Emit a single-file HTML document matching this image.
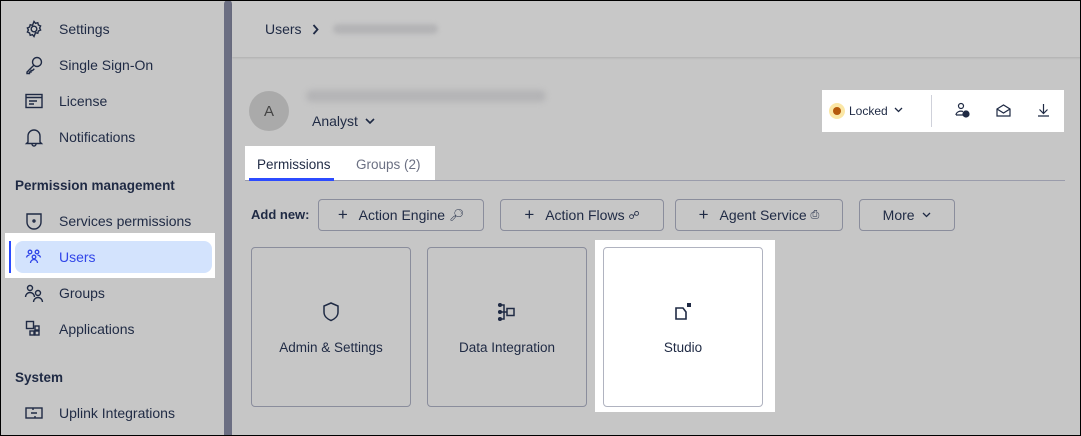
<!DOCTYPE html>
<html><head><meta charset="utf-8"><style>
*{box-sizing:border-box;margin:0;padding:0}
body{width:1081px;height:436px;overflow:hidden;background:#c6c6c6;font-family:"Liberation Sans",sans-serif;color:#1f2a44;position:relative}
.abs{position:absolute}
.nav{position:absolute;left:24px;font-size:14px;display:flex;align-items:center}
.nav svg{width:20px;height:20px;margin-right:15px}
.sec{position:absolute;left:15px;font-size:13.5px;font-weight:bold}
.btn{position:absolute;top:199px;height:32px;border:1px solid #8a8d9c;border-radius:4px;font-size:14px;display:flex;align-items:center;justify-content:center;background:#c6c6c6}
.card{position:absolute;top:247px;width:160px;height:160px;border:1px solid #8a8d9c;border-radius:4px;font-size:13.5px;text-align:center}
.card svg{position:absolute;left:67px;top:52px}
.card span{position:absolute;left:0;right:0;top:92px}
</style></head><body>
<div class="abs" style="left:224px;top:0;width:8px;height:436px;background:#6b6e82;border-radius:4px 4px 0 0"></div>
<div class="nav" style="top:19px"><svg viewBox="0 0 20 20" fill="none" stroke="#1f2a44" stroke-width="1.4"><circle cx="10" cy="10" r="2.8"/><path d="M10 2.5l1.5 1.8 2.3-.6.6 2.3 2.2 1-1 2 1 2-2.2 1-.6 2.3-2.3-.6L10 17.5l-1.5-1.8-2.3.6-.6-2.3-2.2-1 1-2-1-2 2.2-1 .6-2.3 2.3.6z"/></svg>Settings</div>
<div class="nav" style="top:55px"><svg viewBox="0 0 20 20" fill="none" stroke="#1f2a44" stroke-width="1.4"><circle cx="13" cy="7" r="4.5"/><path d="M9.8 10.2L3 17v1.5h2.5V17H7v-1.5h1.5l1.8-1.8"/></svg>Single Sign-On</div>
<div class="nav" style="top:91px"><svg viewBox="0 0 20 20" fill="none" stroke="#1f2a44" stroke-width="1.4"><rect x="2" y="3.5" width="16" height="13"/><path d="M2 6.5h16M5 10h8M5 13h5"/></svg>License</div>
<div class="nav" style="top:127px"><svg viewBox="0 0 20 20" fill="none" stroke="#1f2a44" stroke-width="1.4"><path d="M4 15V9a6 6 0 0112 0v6l1.5 1.5h-15zM8 17a2 2 0 004 0"/></svg>Notifications</div>
<div class="sec" style="top:178px">Permission management</div>
<div class="nav" style="top:211px"><svg viewBox="0 0 20 20" fill="none" stroke="#1f2a44" stroke-width="1.4"><path d="M3 3h14v8a7 7 0 01-14 0z"/><circle cx="10" cy="10" r="1"/></svg>Services permissions</div>
<div class="abs" style="left:5px;top:233px;width:210px;height:45px;background:#fff"></div>
<div class="abs" style="left:15px;top:241px;width:197px;height:32px;background:#d3e3fd;border-radius:8px"></div>
<div class="abs" style="left:9px;top:241px;width:2px;height:32px;background:#2c4bff"></div>
<div class="nav" style="top:247px;color:#3146e8"><svg viewBox="0 0 20 20" fill="none" stroke="#3146e8" stroke-width="1.3"><circle cx="6" cy="5" r="1.8"/><circle cx="13" cy="5" r="1.8"/><circle cx="10" cy="10" r="1.8"/><path d="M2.5 10.5a3.5 3 0 013-2.5M16.5 10.5a3.5 3 0 00-3-2.5M6.5 16a3.5 3.5 0 017 0"/></svg>Users</div>
<div class="nav" style="top:283px"><svg viewBox="0 0 20 20" fill="none" stroke="#1f2a44" stroke-width="1.4"><circle cx="6" cy="5" r="2.5"/><circle cx="14" cy="10" r="2.5"/><path d="M1.5 14a4.5 4.5 0 019 0M9.5 19a4.5 4.5 0 019 0"/></svg>Groups</div>
<div class="nav" style="top:319px"><svg viewBox="0 0 20 20" fill="none" stroke="#1f2a44" stroke-width="1.4"><rect x="2.5" y="2.5" width="7" height="7"/><rect x="11" y="7" width="4" height="4"/><rect x="6" y="12" width="4" height="4"/><rect x="11" y="12" width="4" height="4"/></svg>Applications</div>
<div class="sec" style="top:370px">System</div>
<div class="nav" style="top:403px"><svg viewBox="0 0 20 20" fill="none" stroke="#1f2a44" stroke-width="1.4"><rect x="2" y="5" width="16" height="10"/><path d="M7 10h6M9 5v2M11 13v2"/></svg>Uplink Integrations</div>
<div class="abs" style="left:232px;top:0;right:0;height:57px;background:#c8c8c8;box-shadow:0 1px 2px rgba(0,0,0,.12)"></div>
<div class="abs" style="left:265px;top:21px;font-size:14px">Users</div>
<svg class="abs" style="left:312px;top:24px" width="7" height="11" viewBox="0 0 7 11" fill="none" stroke="#1f2a44" stroke-width="1.8"><path d="M1.5 1l4 4.5-4 4.5"/></svg>
<div class="abs" style="left:333px;top:24px;width:105px;height:10px;background:#b4b4b6;border-radius:5px;filter:blur(2px)"></div>
<div class="abs" style="left:249px;top:91px;width:40px;height:40px;border-radius:50%;background:#aaa;font-size:15px;display:flex;align-items:center;justify-content:center;color:#444">A</div>
<div class="abs" style="left:306px;top:90px;width:240px;height:12px;background:#b4b4b6;border-radius:6px;filter:blur(3px)"></div>
<div class="abs" style="left:312px;top:113px;font-size:14px">Analyst</div>
<svg class="abs" style="left:365px;top:118px" width="10" height="7" viewBox="0 0 10 7" fill="none" stroke="#1f2a44" stroke-width="1.6"><path d="M1 1l4 4 4-4"/></svg>
<div class="abs" style="left:822px;top:90px;width:242px;height:42px;background:#fff"></div>
<div class="abs" style="left:829px;top:103px;width:16px;height:16px;border-radius:50%;background:#fbe7a6"></div>
<div class="abs" style="left:833px;top:107px;width:8px;height:8px;border-radius:50%;background:#b5590c"></div>
<div class="abs" style="left:849px;top:104px;font-size:12px">Locked</div>
<svg class="abs" style="left:894px;top:107px" width="9" height="6" viewBox="0 0 9 6" fill="none" stroke="#1f2a44" stroke-width="1.3"><path d="M1 1l3.5 3.5L8 1"/></svg>
<div class="abs" style="left:931px;top:95px;width:1px;height:32px;background:#cfd1da"></div>
<svg class="abs" style="left:955px;top:102px" width="16" height="17" viewBox="0 0 16 17" fill="none" stroke="#1f2a44" stroke-width="1.2"><circle cx="6" cy="4" r="2.5"/><path d="M1 13a5 4 0 017-3.5M1 13h7"/><circle cx="11" cy="12" r="3" fill="#1f2a44"/></svg>
<svg class="abs" style="left:996px;top:104px" width="15" height="13" viewBox="0 0 15 13" fill="none" stroke="#1f2a44" stroke-width="1.2"><path d="M1 5l6.5-4L14 5v7H1zM1 5l6.5 4L14 5"/></svg>
<svg class="abs" style="left:1037px;top:103px" width="13" height="14" viewBox="0 0 13 14" fill="none" stroke="#1f2a44" stroke-width="1.2"><path d="M6.5 1v9M2.5 6.5l4 4 4-4M1 13h11"/></svg>
<div class="abs" style="left:245px;top:146px;width:190px;height:35px;background:#fff"></div>
<div class="abs" style="left:245px;top:180px;right:16px;height:1px;background:#9a9cab"></div>
<div class="abs" style="left:257px;top:157px;font-size:13.5px">Permissions</div>
<div class="abs" style="left:249px;top:178px;width:85px;height:3px;background:#2c4bff"></div>
<div class="abs" style="left:356px;top:157px;font-size:13.5px;color:#6b7083">Groups (2)</div>
<div class="abs" style="left:251px;top:207px;font-size:13px;font-weight:bold">Add new:</div>
<div class="btn" style="left:318px;width:166px"><b style="font-size:17px;font-weight:normal">+</b>&nbsp;&nbsp; Action Engine&nbsp; <span style="font-size:12px">&#x1F50E;&#xFE0E;</span></div>
<div class="btn" style="left:500px;width:164px"><b style="font-size:17px;font-weight:normal">+</b>&nbsp;&nbsp; Action Flows&nbsp; <span style="font-size:11px">&#x260D;</span></div>
<div class="btn" style="left:675px;width:168px"><b style="font-size:17px;font-weight:normal">+</b>&nbsp;&nbsp; Agent Service&nbsp; <span style="font-size:11px">&#x2399;</span></div>
<div class="btn" style="left:859px;width:96px">More&nbsp;&nbsp; <svg width="9" height="6" viewBox="0 0 9 6" fill="none" stroke="#1f2a44" stroke-width="1.3"><path d="M1 1l3.5 3.5L8 1"/></svg></div>
<div class="card" style="left:251px"><svg width="24" height="24" viewBox="0 0 24 24" fill="none" stroke="#1f2a44" stroke-width="1.5"><path d="M12 3l7 3v6c0 4-3 7-7 8.5C8 19 5 16 5 12V6z"/></svg><span>Admin &amp; Settings</span></div>
<div class="card" style="left:427px"><svg width="24" height="24" viewBox="0 0 24 24" fill="none" stroke="#1f2a44" stroke-width="1.5"><circle cx="5" cy="5" r="1.3" fill="#1f2a44"/><circle cx="5" cy="12" r="1.3" fill="#1f2a44"/><circle cx="5" cy="19" r="1.3" fill="#1f2a44"/><path d="M5 5h4v14H5M5 12h7"/><rect x="12" y="8.5" width="7" height="7"/></svg><span>Data Integration</span></div>
<div class="abs" style="left:595px;top:240px;width:180px;height:172px;background:#fff"></div>
<div class="card" style="left:603px;background:#fff;border-color:#b0b3c0"><svg width="24" height="24" viewBox="0 0 24 24" fill="none" stroke="#1f2a44" stroke-width="1.6"><path d="M5 8h7l3 4v7H5z"/><rect x="16" y="3" width="4" height="4" fill="#1f2a44" stroke="none"/></svg><span>Studio</span></div>
<div class="abs" style="left:0;top:0;width:1081px;height:436px;border:1px solid #000;pointer-events:none"></div>
</body></html>
